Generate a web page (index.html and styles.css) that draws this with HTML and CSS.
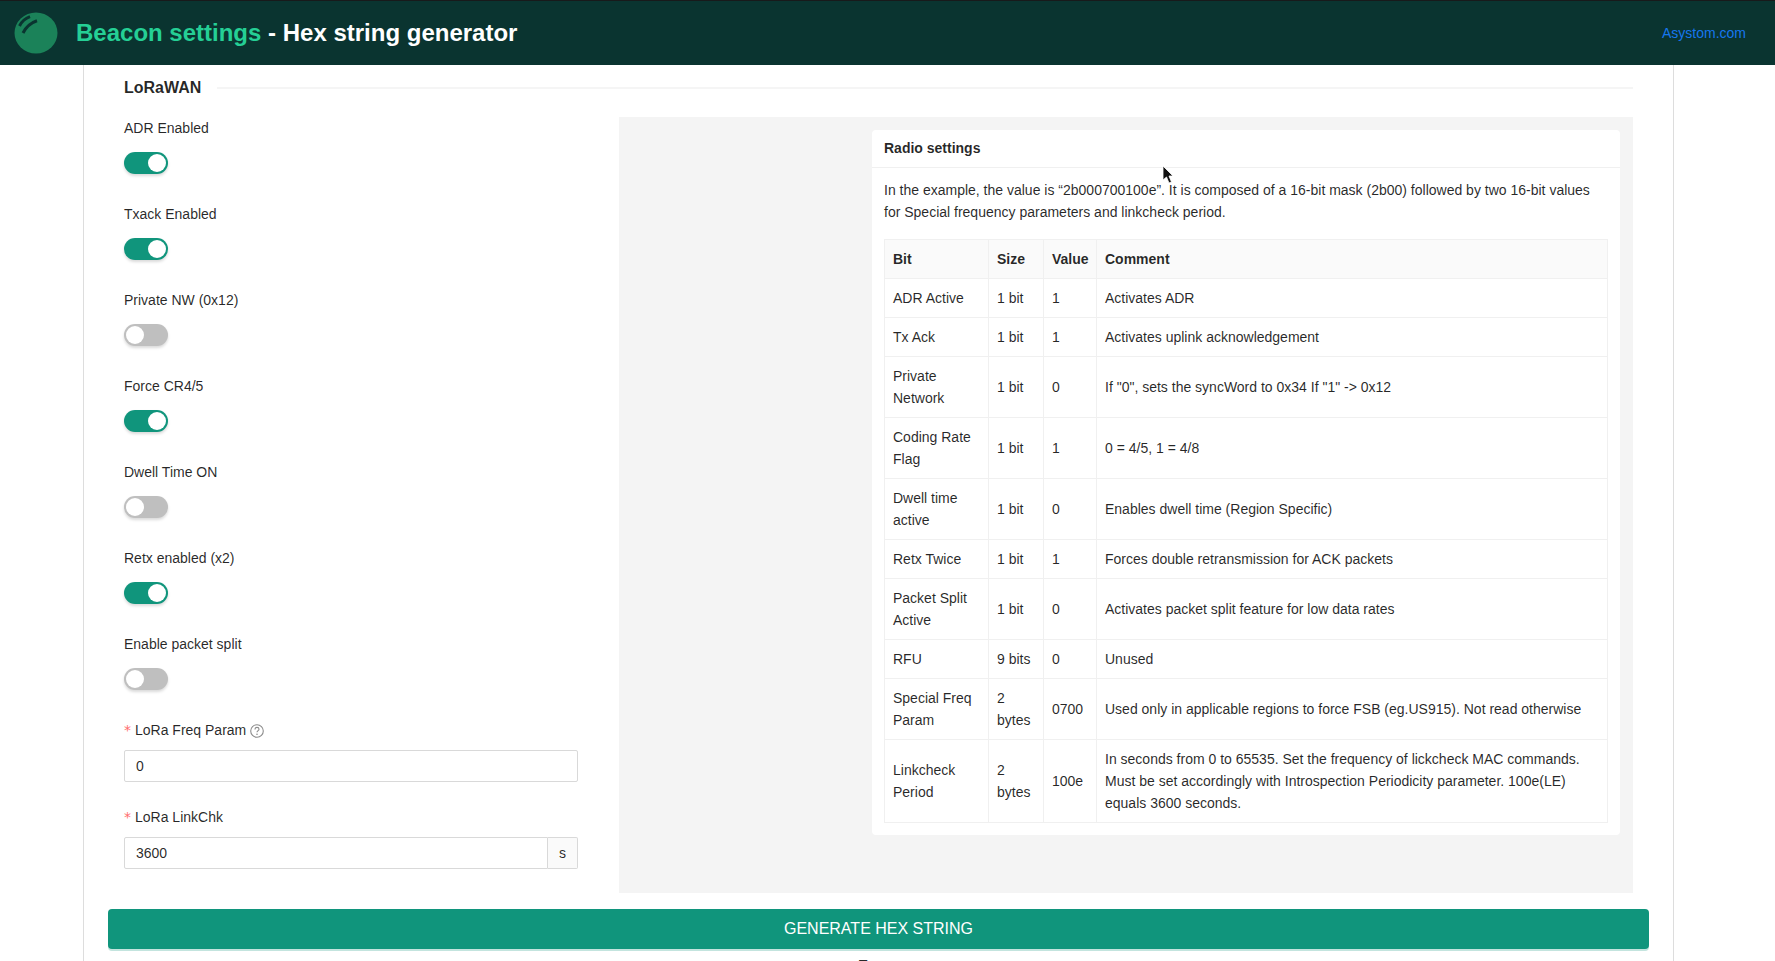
FILE: index.html
```html
<!DOCTYPE html>
<html lang="en">
<head>
    <meta charset="UTF-8">
    <meta name="viewport" content="width=device-width, initial-scale=1.0">
    <title>Beacon settings - Hex string generator</title>
    <link rel="stylesheet" href="styles.css">
</head>
<body>

<header class="topbar">
    <div class="brand">
        <svg class="logo" viewBox="0 0 44 42" width="44" height="42">
            <ellipse cx="22" cy="21" rx="21.500" ry="20.500" fill="#1b8259"/>
            <path d="M5.500 14 C7.500 10 11 6.500 16 4.700" class="logo-mark"/>
            <path d="M9 21 C11.500 16 16 11 23 8.700" class="logo-mark"/>
        </svg>
        <h1><span class="accent">Beacon settings</span> - Hex string generator</h1>
    </div>
    <a class="site-link" href="#">Asystom.com</a>
</header>

<main class="page">
    <div class="divider"><span>LoRaWAN</span></div>

    <div class="columns">
        <form class="fields">
            <div class="field">
                <label>ADR Enabled</label>
                <span class="switch on"></span>
            </div>
            <div class="field">
                <label>Txack Enabled</label>
                <span class="switch on"></span>
            </div>
            <div class="field">
                <label>Private NW (0x12)</label>
                <span class="switch"></span>
            </div>
            <div class="field">
                <label>Force CR4/5</label>
                <span class="switch on"></span>
            </div>
            <div class="field">
                <label>Dwell Time ON</label>
                <span class="switch"></span>
            </div>
            <div class="field">
                <label>Retx enabled (x2)</label>
                <span class="switch on"></span>
            </div>
            <div class="field">
                <label>Enable packet split</label>
                <span class="switch"></span>
            </div>
            <div class="field field-input">
                <label class="required">LoRa Freq Param
                    <svg class="help" viewBox="0 0 14 14" width="14" height="14">
                        <circle cx="7" cy="7" r="6.300" fill="none" stroke="#8c8c8c" stroke-width="1.100"/>
                        <path d="M5 5.400 C5 4 6 3.400 7 3.400 C8.200 3.400 9 4.200 9 5.200 C9 6.600 7 6.600 7 8.300" fill="none" stroke="#8c8c8c" stroke-width="1.100"/>
                        <circle cx="7" cy="10.300" r="0.800" fill="#8c8c8c"/>
                    </svg>
                </label>
                <input class="text-input" type="text" value="0">
            </div>
            <div class="field field-input">
                <label class="required">LoRa LinkChk</label>
                <div class="input-group">
                    <input class="text-input" type="text" value="3600">
                    <span class="addon">s</span>
                </div>
            </div>
        </form>

        <aside class="panel">
            <div class="card">
                <div class="card-head">Radio settings</div>
                <div class="card-body">
                    <p>In the example, the value is “2b000700100e”. It is composed of a 16-bit mask (2b00) followed by two 16-bit values for Special frequency parameters and linkcheck period.</p>
                    <table>
                        <thead>
                        <tr>
                            <th class="col-bit">Bit</th>
                            <th class="col-size">Size</th>
                            <th class="col-value">Value</th>
                            <th>Comment</th>
                        </tr>
                        </thead>
                        <tbody>
                        <tr><td>ADR Active</td><td>1 bit</td><td>1</td><td>Activates ADR</td></tr>
                        <tr><td>Tx Ack</td><td>1 bit</td><td>1</td><td>Activates uplink acknowledgement</td></tr>
                        <tr><td>Private Network</td><td>1 bit</td><td>0</td><td>If "0", sets the syncWord to 0x34 If "1" -&gt; 0x12</td></tr>
                        <tr><td>Coding Rate Flag</td><td>1 bit</td><td>1</td><td>0 = 4/5, 1 = 4/8</td></tr>
                        <tr><td>Dwell time active</td><td>1 bit</td><td>0</td><td>Enables dwell time (Region Specific)</td></tr>
                        <tr><td>Retx Twice</td><td>1 bit</td><td>1</td><td>Forces double retransmission for ACK packets</td></tr>
                        <tr><td>Packet Split Active</td><td>1 bit</td><td>0</td><td>Activates packet split feature for low data rates</td></tr>
                        <tr><td>RFU</td><td>9 bits</td><td>0</td><td>Unused</td></tr>
                        <tr><td>Special Freq Param</td><td>2 bytes</td><td>0700</td><td>Used only in applicable regions to force FSB (eg.US915). Not read otherwise</td></tr>
                        <tr><td>Linkcheck Period</td><td>2 bytes</td><td>100e</td><td>In seconds from 0 to 65535. Set the frequency of lickcheck MAC commands. Must be set accordingly with Introspection Periodicity parameter. 100e(LE) equals 3600 seconds.</td></tr>
                        </tbody>
                    </table>
                </div>
            </div>
        </aside>
    </div>

    <button class="generate" type="button">GENERATE HEX STRING</button>
    <div class="result-label">Front</div>
</main>

<svg class="cursor" viewBox="0 0 12 20" width="12" height="20">
    <path d="M1 1 L1 15 L4.500 12 L7 18 L9.500 17 L7 11 L11 11 Z" fill="#111" stroke="#fff" stroke-width="0.800"/>
</svg>

</body>
</html>
```

FILE: styles.css
```css
* {
    box-sizing: border-box;
}

html, body {
    height: 961px;
    overflow: hidden;
}

body {
    margin: 0;
    font-family: "Liberation Sans", Arial, sans-serif;
    font-size: 14px;
    line-height: 1.5715;
    color: rgba(0, 0, 0, 0.85);
    background: #fff;
}

.topbar {
    height: 65px;
    background: #0a3430;
    border-top: 1px solid #181a1b;
    display: flex;
    align-items: center;
    justify-content: space-between;
    padding: 0 29px 0 14px;
}

.brand {
    display: flex;
    align-items: center;
    gap: 18px;
}

.logo {
    display: block;
}

.logo-mark {
    fill: none;
    stroke: #0a3430;
    stroke-width: 3;
}

.topbar h1 {
    margin: 0;
    font-size: 24px;
    line-height: 32px;
    font-weight: 700;
    color: #fff;
}

.accent {
    color: #25cf95;
}

.site-link {
    color: #1677ee;
    text-decoration: none;
    font-size: 14px;
}

.page {
    width: 1591px;
    height: 896px;
    margin-left: 83px;
    border-left: 1px solid #ddd;
    border-right: 1px solid #ddd;
    padding: 0 24px;
}

.divider {
    display: flex;
    align-items: center;
    height: 46px;
    padding: 0 16px;
    font-size: 16px;
    font-weight: 700;
}

.divider span {
    padding-right: 16px;
}

.divider::after {
    content: "";
    flex: 1;
    height: 2px;
    background: #f5f5f5;
}

.columns {
    display: flex;
    padding: 1px 16px 0;
    gap: 41px;
}

.fields {
    width: 454px;
    flex: none;
}

.field {
    height: 86px;
}

.field label {
    display: block;
    height: 32px;
    line-height: 32px;
    margin-bottom: 8px;
}

.field-input {
    height: 87px;
}

.field-input label {
    margin-bottom: 4px;
}

.required::before {
    content: "*";
    display: inline-block;
    width: 11px;
    color: #ff6b6d;
    font-family: "DejaVu Sans", sans-serif;
    font-size: 14px;
}

.help {
    vertical-align: -3px;
}

.switch {
    display: block;
    position: relative;
    width: 44px;
    height: 22px;
    border-radius: 11px;
    background: #bfbfbf;
    box-shadow: 0 2px 3px rgba(0, 0, 0, 0.15);
}

.switch::after {
    content: "";
    position: absolute;
    top: 2px;
    left: 2px;
    width: 18px;
    height: 18px;
    border-radius: 50%;
    background: #fff;
}

.switch.on {
    background: #10957c;
}

.switch.on::after {
    left: 24px;
}

.text-input {
    display: block;
    width: 100%;
    height: 32px;
    padding: 4px 11px;
    border: 1px solid #d9d9d9;
    border-radius: 2px;
    font: inherit;
    color: inherit;
    background: #fff;
}

.input-group {
    display: flex;
}

.input-group .text-input {
    flex: 1;
    min-width: 0;
    border-radius: 2px 0 0 2px;
}

.addon {
    flex: none;
    width: 30px;
    height: 32px;
    line-height: 30px;
    text-align: center;
    border: 1px solid #d9d9d9;
    border-left: 0;
    border-radius: 0 2px 2px 0;
    background: #fafafa;
}

.panel {
    flex: 1;
    height: 776px;
    margin-top: 5px;
    background: #f4f4f4;
    padding: 13px 13px 0 253px;
}

.card {
    background: #fff;
    border-radius: 4px;
}

.card-head {
    height: 38px;
    line-height: 37px;
    padding: 0 12px;
    font-weight: 700;
    border-bottom: 1px solid #f0f0f0;
}

.card-body {
    padding: 11px 12px 12px;
}

.card-body p {
    margin: 0 0 16px;
}

table {
    width: 100%;
    border-collapse: collapse;
    table-layout: fixed;
}

th, td {
    padding: 8px;
    border: 1px solid #f0f0f0;
    text-align: left;
    font-weight: 400;
}

th {
    background: #fafafa;
    font-weight: 700;
}

.col-bit {
    width: 104px;
}

.col-size {
    width: 55px;
}

.col-value {
    width: 53px;
}

.generate {
    display: block;
    width: 100%;
    height: 40px;
    margin-top: 16px;
    border: none;
    border-radius: 4px;
    background: #10957c;
    color: #fff;
    font: inherit;
    font-size: 16px;
    box-shadow: 0 2px 0 rgba(16, 149, 124, 0.25);
}

.result-label {
    margin-top: 5px;
    text-align: center;
    font-weight: 700;
    font-size: 16px;
}

.cursor {
    position: absolute;
    left: 1162px;
    top: 165px;
}
```
